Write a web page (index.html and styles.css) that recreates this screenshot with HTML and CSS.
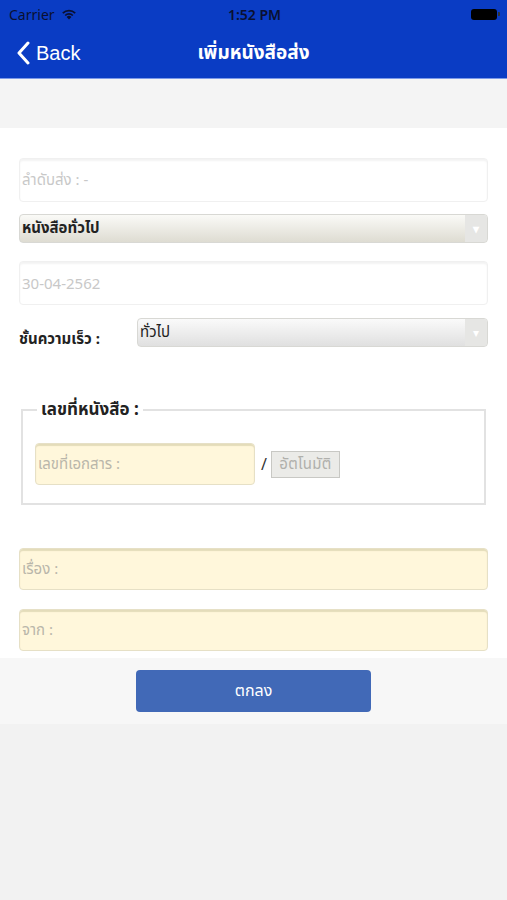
FILE: index.html
```html
<!DOCTYPE html>
<html lang="th">
<head>
<meta charset="utf-8">
<link rel="stylesheet" href="styles.css">
</head>
<body>
<header class="topbar">
  <div class="status">
    <div class="carrier">Carrier
      <svg class="wifi" width="16" height="12" viewBox="0 0 16 12"><path d="M8 11.5 L5.6 8.9 A3.4 3.4 0 0 1 10.4 8.9 Z" fill="#0a1030"/><path d="M3.6 6.9 A6.3 6.3 0 0 1 12.4 6.9 L11.2 8.1 A4.6 4.6 0 0 0 4.8 8.1 Z" fill="#0a1030"/><path d="M1.2 4.5 A9.7 9.7 0 0 1 14.8 4.5 L13.6 5.7 A8 8 0 0 0 2.4 5.7 Z" fill="#0a1030"/></svg>
    </div>
    <div class="time">1:52 PM</div>
    <div class="battery"><span class="cell"></span><span class="nub"></span></div>
  </div>
  <nav class="navbar">
    <div class="back">
      <svg width="14" height="24" viewBox="0 0 14 24"><path d="M12 2 L3 12 L12 22" fill="none" stroke="#fff" stroke-width="3" stroke-linecap="round" stroke-linejoin="round"/></svg>
      <span>Back</span>
    </div>
    <div class="title">เพิ่มหนังสือส่ง</div>
  </nav>
</header>
<div class="band"></div>
<main class="form">
  <div class="field plain"><span class="ph">ลำดับส่ง : -</span></div>
  <div class="select wide"><span class="sel-text">หนังสือทั่วไป</span><span class="arrow">&#9662;</span></div>
  <div class="field plain date"><span class="ph">30-04-2562</span></div>
  <div class="row">
    <span class="label">ชั้นความเร็ว :</span>
    <div class="select narrow"><span class="sel-text">ทั่วไป</span><span class="arrow">&#9662;</span></div>
  </div>
  <fieldset class="docno">
    <legend>เลขที่หนังสือ :</legend>
    <div class="docrow">
      <div class="field yellow small"><span class="ph">เลขที่เอกสาร :</span></div>
      <span class="slash">/</span>
      <span class="auto">อัตโนมัติ</span>
    </div>
  </fieldset>
  <div class="field yellow subject"><span class="ph">เรื่อง :</span></div>
  <div class="field yellow from"><span class="ph">จาก :</span></div>
</main>
<footer class="actions">
  <button class="ok">ตกลง</button>
</footer>
</body>
</html>
```
FILE: styles.css
```css
* { box-sizing: border-box; }
html, body { margin: 0; padding: 0; }
body {
  width: 507px;
  height: 900px;
  background: #f2f2f2;
  font-family: "Noto Sans", "Noto Sans Thai", "Liberation Sans", sans-serif;
  overflow: hidden;
}
.topbar {
  background: #0a3cc4;
  border-bottom: 1px solid #7d9ae8;
}
.status {
  height: 28px;
  display: flex;
  align-items: center;
  justify-content: space-between;
  padding: 0 7px 0 9px;
  color: #0a1030;
  font-size: 14px;
}
.carrier { display: flex; align-items: center; gap: 6px; width: 120px; }
.time { font-weight: 600; font-size: 14px; }
.battery { width: 120px; display: flex; justify-content: flex-end; align-items: center; }
.cell { width: 26px; height: 11px; background: #000; border-radius: 3px; }
.nub { width: 2px; height: 4px; background: #333; margin-left: 1px; border-radius: 0 1px 1px 0; }
.navbar {
  height: 50px;
  display: flex;
  align-items: center;
  position: relative;
  color: #fff;
}
.back {
  display: flex;
  align-items: center;
  gap: 6px;
  padding-left: 16px;
  font-size: 20px;
  font-family: "Liberation Sans", sans-serif;
}
.title {
  position: absolute;
  left: 0; right: 0;
  text-align: center;
  font-weight: 700;
  font-size: 19px;
  pointer-events: none;
}
.band { height: 49px; background: #f4f4f4; }
.form {
  background: #fff;
  padding: 30px 19px 7px;
  display: flex;
  flex-direction: column;
}
.field {
  height: 44px;
  border-radius: 4px;
  display: flex;
  align-items: center;
  padding-left: 2px;
  font-size: 15px;
}
.field.plain {
  border: 1px solid #f0f0f0;
  box-shadow: inset 0 2px 2px #f3f3f3;
  background: #fff;
}
.ph { color: #c8c8c8; }
.field.yellow {
  background: #fff7db;
  border: 1px solid #e6e0c6;
  box-shadow: inset 0 2px 1px #e4dcba;
  height: 42px;
}
.field.yellow .ph { color: #b9b6aa; }
.select {
  height: 29px;
  border-radius: 4px;
  background: linear-gradient(#fafaf7, #dedcd2);
  border: 1px solid #d8d8d4;
  display: flex;
  align-items: center;
  justify-content: space-between;
  font-size: 15px;
  font-weight: 700;
  color: #222;
  overflow: hidden;
}
.sel-text { padding-left: 2px; }
.arrow {
  width: 22px;
  height: 100%;
  display: flex;
  align-items: center;
  justify-content: center;
  background: #e6e6e4;
  color: #fff;
  font-size: 12px;
}
.select.wide { margin-top: 12px; }
.field.date { margin-top: 18px; }
.row {
  margin-top: 13px;
  display: flex;
  align-items: flex-start;
}
.label {
  width: 118px;
  font-size: 15px;
  font-weight: 700;
  color: #222;
  padding-top: 10px;
}
.select.narrow { flex: 1; font-weight: 400; background: linear-gradient(#fafafa, #e0e0e0); }
.docno {
  margin: 46px 2px 0;
  border: 2px solid #e2e2e2;
  padding: 0 12px 18px;
}
.docno legend {
  font-size: 17px;
  font-weight: 700;
  color: #222;
  padding: 0 4px;
  margin-left: 2px;
}
.docrow { display: flex; align-items: center; margin-top: 20px; }
.field.small { width: 220px; }
.slash { margin: 0 4px 0 6px; font-size: 16px; color: #333; }
.auto {
  width: 69px;
  height: 27px;
  display: flex;
  align-items: center;
  justify-content: center;
  border: 1px solid #c8c8c4;
  background: #ebebe8;
  color: #b0b0ac;
  font-size: 15px;
  letter-spacing: 0.3px;
}
.field.subject { margin-top: 43px; }
.field.from { margin-top: 19px; }
.actions {
  background: #f7f7f7;
  padding: 12px 0 12px;
  display: flex;
  justify-content: center;
}
.ok {
  width: 235px;
  height: 42px;
  border: none;
  border-radius: 4px;
  background: #4169b7;
  color: #fff;
  font-size: 16px;
  font-family: inherit;
}
```
